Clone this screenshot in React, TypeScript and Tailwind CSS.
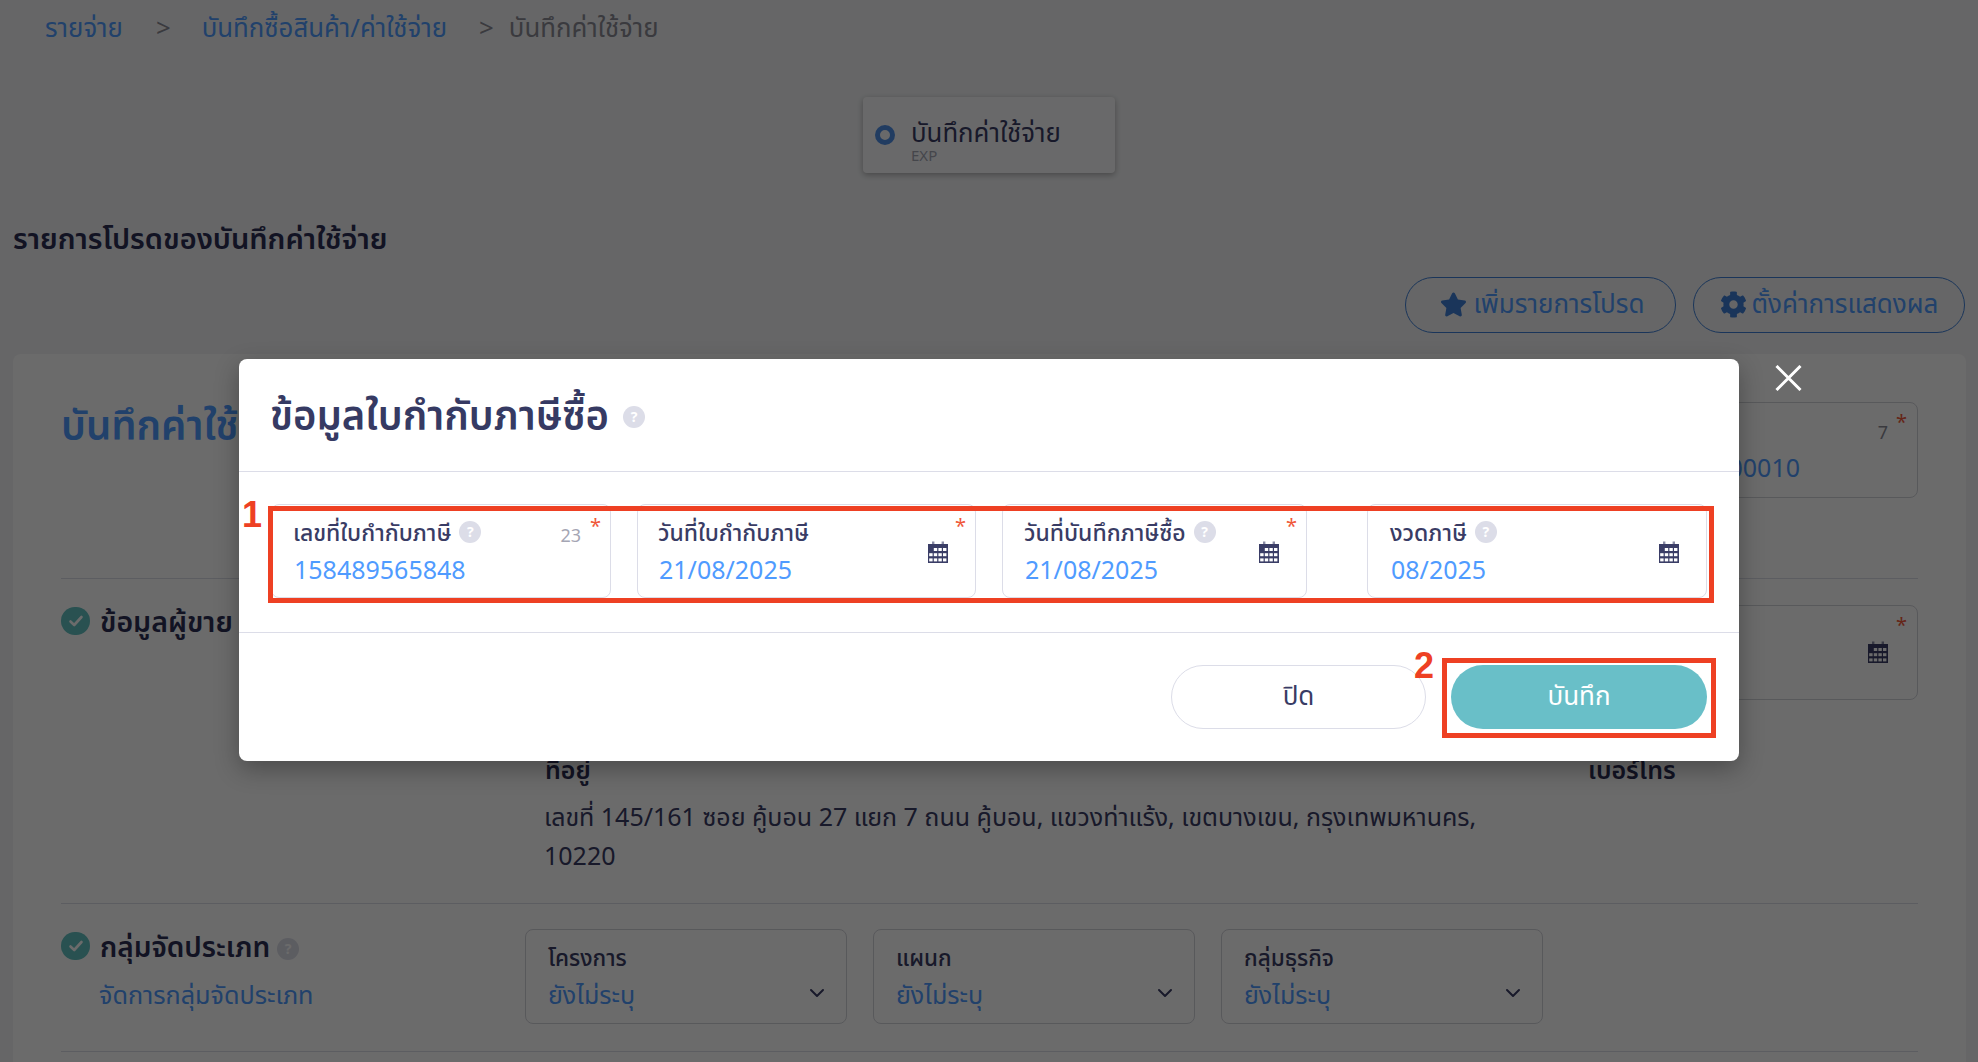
import React from "react";
import { FaStar, FaCog } from "react-icons/fa";
import { ChevronDown } from "lucide-react";

function Help({ className = "" }: { className?: string }) {
  return (
    <span className={`inline-flex h-[22px] w-[22px] shrink-0 items-center justify-center rounded-full bg-[#dcdde8] text-[14px] font-bold leading-none text-white ${className}`}>?</span>
  );
}

function Calendar() {
  const cells: React.ReactNode[] = [];
  for (let r = 0; r < 3; r++) {
    for (let c = 0; c < 4; c++) {
      if (r === 0 && c === 0) continue;
      cells.push(<rect key={`${r}-${c}`} x={1.2 + c * 4.6} y={7 + r * 5.2} width={3.4} height={3} fill="#fff" />);
    }
  }
  return (
    <svg width="20" height="22" viewBox="0 0 20 22" className="shrink-0">
      <rect x="0" y="3" width="20" height="19" fill="#3a3d66" />
      <rect x="4" y="0.5" width="2.4" height="2.5" fill="#8a8ca6" />
      <rect x="13.6" y="0.5" width="2.4" height="2.5" fill="#8a8ca6" />
      {cells}
    </svg>
  );
}

function Star({ className = "" }: { className?: string }) {
  return <span className={`absolute text-[20px] leading-none text-[#f0583a] ${className}`}>*</span>;
}

function DateField({ label, value, help, required, width, pl, iconRight }: { label: string; value: string; help?: boolean; required?: boolean; width: string; pl: string; iconRight: string }) {
  return (
    <div className={`relative h-[94px] shrink-0 rounded-[8px] border border-[#dcdde8] ${width} ${pl}`}>
      <div className="flex items-center gap-[8px] pt-[13px] text-[23px] font-medium leading-[28px] text-[#393c65]">
        <span>{label}</span>
        {help && <Help />}
      </div>
      <div className="pl-[1px] pt-[6px] text-[25px] leading-[34px] text-[#4f9bff]">{value}</div>
      <div className={`absolute top-[36px] ${iconRight}`}><Calendar /></div>
      {required && <Star className="right-[9px] top-[11px]" />}
    </div>
  );
}

function CheckDot() {
  return (
    <span className="flex h-[28px] w-[29px] shrink-0 items-center justify-center rounded-full bg-[#62c0c0]">
      <svg width="16" height="14" viewBox="0 0 16 14">
        <path d="M2.5 7.5 L6.2 11 L13.5 3" stroke="#fff" strokeWidth="2.6" strokeLinecap="round" strokeLinejoin="round" fill="none" />
      </svg>
    </span>
  );
}

function SelectBox({ label }: { label: string }) {
  return (
    <div className="relative h-[95px] w-[322px] shrink-0 rounded-[8px] border border-[#d2d3da] pl-[22px]">
      <div className="pt-[14px] text-[22.5px] font-medium leading-[28px] text-[#393c65]">{label}</div>
      <div className="pt-[5px] text-[25px] leading-[34px] text-[#4f9bff]">ยังไม่ระบุ</div>
      <ChevronDown className="absolute right-[17px] top-[51px] text-[#393c65]" size={24} />
    </div>
  );
}

export default function App() {
  return (
    <div className="relative h-[1062px] w-[1978px] overflow-hidden bg-[#f3f4f6] font-['Noto_Sans','Noto_Sans_Thai',sans-serif]">
      {/* Breadcrumb */}
      <div className="flex h-[56px] items-center pl-[45px] text-[25.8px] leading-none">
        <span className="text-[#4f9bff]">รายจ่าย</span>
        <span className="ml-[33px] text-[#8a8a95]">&gt;</span>
        <span className="ml-[31px] text-[#4f9bff]">บันทึกซื้อสินค้า/ค่าใช้จ่าย</span>
        <span className="ml-[32px] text-[#8a8a95]">&gt;</span>
        <span className="ml-[15px] text-[#8a8a95]">บันทึกค่าใช้จ่าย</span>
      </div>

      {/* Step card */}
      <div className="mt-[41px] flex justify-center">
        <div className="flex h-[76px] w-[252px] items-center rounded-[4px] bg-[#fbfbfc] pl-[12px] shadow-[0_2px_6px_rgba(0,0,0,0.3)]">
          <span className="h-[20px] w-[20px] rounded-full border-[5px] border-[#4f8fe8]" />
          <div className="ml-[16px] pt-[10px]">
            <div className="text-[25.8px] leading-[30px] text-[#393c65]">บันทึกค่าใช้จ่าย</div>
            <div className="text-[15px] leading-[16px] text-[#a5a6b4]">EXP</div>
          </div>
        </div>
      </div>

      {/* Favourites */}
      <div className="ml-[13px] mt-[45px] h-[42px] text-[29px] font-semibold leading-[40px] text-[#2d2f55]">รายการโปรดของบันทึกค่าใช้จ่าย</div>
      <div className="mr-[13px] mt-[17px] flex justify-end gap-[17px]">
        <button className="flex h-[56px] w-[271px] items-center justify-center gap-[7px] rounded-full border border-[#3f7fd6] pb-[4px] pl-[3px] text-[26px] text-[#4f9bff]">
          <FaStar size={27} className="mt-[3px] text-[#3f7fd6]" />
          เพิ่มรายการโปรด
        </button>
        <button className="flex h-[56px] w-[272px] items-center justify-center gap-[5px] rounded-full border border-[#3f7fd6] pb-[4px] text-[26px] text-[#4f9bff]">
          <FaCog size={27} className="mt-[3px] text-[#3f7fd6]" />
          ตั้งค่าการแสดงผล
        </button>
      </div>

      {/* Main card */}
      <div className="ml-[13px] mr-[12px] mt-[21px] h-[720px] rounded-t-[8px] bg-white px-[48px]">
        <div className="flex h-[225px] items-start justify-between border-b border-[#dcdde8] pt-[47px]">
          <div className="text-[40px] font-semibold leading-[48px] text-[#4f9bff]">บันทึกค่าใช้จ่าย</div>
          <div className="relative mt-[1px] h-[96px] w-[577px] rounded-[8px] border border-[#d2d3da]">
            <span className="absolute right-[29px] top-[17px] text-[18px] leading-[24px] text-[#8a8a95]">7</span>
            <Star className="right-[10px] top-[9px]" />
            <div className="absolute right-[117px] top-[47px] text-[25px] leading-[34px] text-[#4f9bff]">00010</div>
          </div>
        </div>

        <div className="flex h-[325px] border-b border-[#dcdde8]">
          <div className="w-[484px] shrink-0 pt-[25px]">
            <div className="flex items-center gap-[10px]">
              <CheckDot />
              <span className="text-[28.5px] font-semibold leading-[34px] text-[#2d2f55]">ข้อมูลผู้ขาย</span>
            </div>
          </div>
          <div className="flex-1">
            <div className="relative flex h-[172px] justify-end pt-[26px]">
              <div className="relative h-[95px] w-[577px] rounded-[8px] border border-[#d2d3da]">
                <div className="absolute right-[29px] top-[35px]"><Calendar /></div>
                <Star className="right-[10px] top-[9px]" />
              </div>
            </div>
            <div className="flex">
              <div className="w-[1045px] shrink-0">
                <div className="text-[25px] font-semibold leading-[36px] text-[#2d2f55]">ที่อยู่</div>
                <div className="mt-[10px] w-[950px] -ml-[1px] text-[25px] leading-[39px] text-[#393c65]">เลขที่ 145/161 ซอย คู้บอน 27 แยก 7 ถนน คู้บอน, แขวงท่าแร้ง, เขตบางเขน, กรุงเทพมหานคร, 10220</div>
              </div>
              <div className="-ml-[2px] text-[25px] font-semibold leading-[36px] text-[#2d2f55]">เบอร์โทร</div>
            </div>
          </div>
        </div>

        <div className="flex h-[148px] border-b border-[#dcdde8]">
          <div className="w-[464px] shrink-0 pt-[25px]">
            <div className="flex items-center gap-[10px]">
              <CheckDot />
              <span className="text-[28px] font-semibold leading-[34px] text-[#2d2f55]">กลุ่มจัดประเภท</span>
              <Help className="mt-[6px] -ml-[3px]" />
            </div>
            <div className="ml-[38px] mt-[14px] text-[25.2px] leading-[34px] text-[#4f9bff]">จัดการกลุ่มจัดประเภท</div>
          </div>
          <div className="flex gap-[26px] pt-[25px]">
            <SelectBox label="โครงการ" />
            <SelectBox label="แผนก" />
            <SelectBox label="กลุ่มธุรกิจ" />
          </div>
        </div>
      </div>

      {/* Dim overlay */}
      <div className="absolute inset-0 bg-black/[.58]" />

      {/* Close icon */}
      <svg className="absolute left-[1775px] top-[365px]" width="27" height="26" viewBox="0 0 27 26">
        <path d="M1.5 1 L25.5 25 M25.5 1 L1.5 25" stroke="#fff" strokeWidth="3" fill="none" />
      </svg>

      {/* Modal */}
      <div className="absolute left-[239px] top-[359px] h-[402px] w-[1500px] rounded-[8px] bg-white shadow-[0_8px_24px_rgba(0,0,0,0.3)]">
        <div className="flex h-[113px] items-center gap-[14px] border-b border-[#dcdde8] pl-[31px]">
          <span className="text-[40px] font-semibold leading-[48px] text-[#363a63]">ข้อมูลใบกำกับภาษีซื้อ</span>
          <Help className="mt-[4px]" />
        </div>
        <div className="flex h-[161px] border-b border-[#dcdde8] pl-[32px] pt-[32px]">
          <div className="relative h-[94px] w-[340px] shrink-0 rounded-[8px] border border-[#dcdde8] pl-[21px]">
            <div className="flex items-center gap-[8px] pt-[13px] text-[23px] font-medium leading-[28px] text-[#393c65]">
              <span>เลขที่ใบกำกับภาษี</span>
              <Help />
            </div>
            <div className="pl-[1px] pt-[6px] text-[25px] leading-[34px] text-[#4f9bff]">158489565848</div>
            <span className="absolute right-[29px] top-[18px] text-[18px] leading-[24px] text-[#a5a6b4]">23</span>
            <Star className="right-[9px] top-[11px]" />
          </div>
          <div className="ml-[26px]">
            <DateField label="วันที่ใบกำกับภาษี" value="21/08/2025" required width="w-[339px]" pl="pl-[20px]" iconRight="right-[27px]" />
          </div>
          <div className="ml-[26px]">
            <DateField label="วันที่บันทึกภาษีซื้อ" value="21/08/2025" help required width="w-[305px]" pl="pl-[21px]" iconRight="right-[27px]" />
          </div>
          <div className="ml-[60px]">
            <DateField label="งวดภาษี" value="08/2025" help width="w-[340px]" pl="pl-[22px]" iconRight="right-[27px]" />
          </div>
        </div>
        <div className="flex justify-end gap-[25px] pr-[32px] pt-[32px]">
          <button className="h-[64px] w-[255px] rounded-full border border-[#dcdde8] bg-white pb-[4px] text-[26px] text-[#393c65]">ปิด</button>
          <button className="h-[64px] w-[256px] rounded-full bg-[#69bfc8] pb-[4px] text-[26px] text-white">บันทึก</button>
        </div>

        {/* Annotations */}
        <div className="absolute left-[29px] top-[147px] h-[97px] w-[1446px] border-[5px] border-[#ee4023]" />
        <div className="absolute left-[1203px] top-[299px] h-[80px] w-[274px] border-[5px] border-[#ee4023]" />
        <span className="absolute left-[3px] top-[133px] font-['Liberation_Sans',sans-serif] text-[36px] font-bold leading-[46px] text-[#ee4023]">1</span>
        <span className="absolute left-[1175px] top-[284px] font-['Liberation_Sans',sans-serif] text-[36px] font-bold leading-[46px] text-[#ee4023]">2</span>
      </div>
    </div>
  );
}
